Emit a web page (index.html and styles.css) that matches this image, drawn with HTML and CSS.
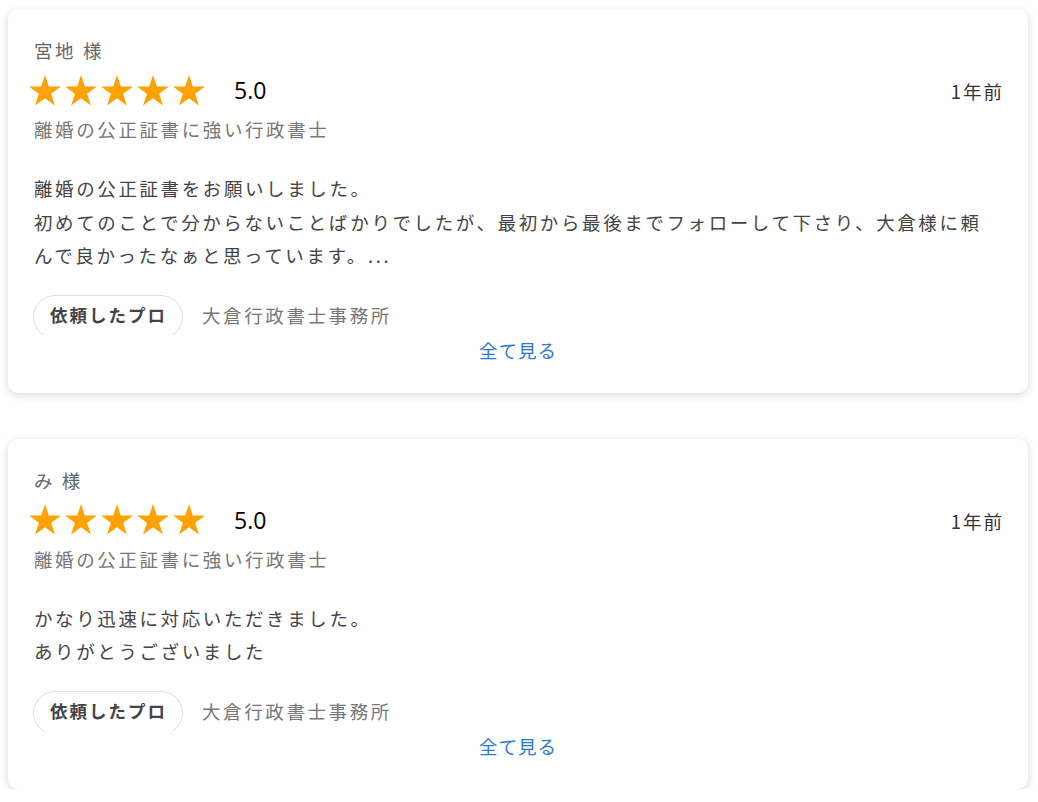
FILE: index.html
```html
<!DOCTYPE html>
<html lang="ja">
<head>
    <meta charset="UTF-8">
    <meta name="viewport" content="width=device-width, initial-scale=1.0">
    <title>口コミ</title>
    <link rel="stylesheet" href="styles.css">
</head>
<body>
    <div class="review-list">
        <div class="review-card">
            <div class="reviewer">宮地 様</div>
            <div class="rating-row">
                <div class="stars">
                    <svg viewBox="0 0 32 31"><polygon points="16,0 19.78,11.62 32,11.62 22.12,18.81 25.89,30.43 16,23.25 6.11,30.43 9.88,18.81 0,11.62 12.22,11.62"/></svg>
                    <svg viewBox="0 0 32 31"><polygon points="16,0 19.78,11.62 32,11.62 22.12,18.81 25.89,30.43 16,23.25 6.11,30.43 9.88,18.81 0,11.62 12.22,11.62"/></svg>
                    <svg viewBox="0 0 32 31"><polygon points="16,0 19.78,11.62 32,11.62 22.12,18.81 25.89,30.43 16,23.25 6.11,30.43 9.88,18.81 0,11.62 12.22,11.62"/></svg>
                    <svg viewBox="0 0 32 31"><polygon points="16,0 19.78,11.62 32,11.62 22.12,18.81 25.89,30.43 16,23.25 6.11,30.43 9.88,18.81 0,11.62 12.22,11.62"/></svg>
                    <svg viewBox="0 0 32 31"><polygon points="16,0 19.78,11.62 32,11.62 22.12,18.81 25.89,30.43 16,23.25 6.11,30.43 9.88,18.81 0,11.62 12.22,11.62"/></svg>
                </div>
                <span class="score">5.0</span>
                <span class="posted">1年前</span>
            </div>
            <div class="service">離婚の公正証書に強い行政書士</div>
            <p class="review-text">離婚の公正証書をお願いしました。<br>初めてのことで分からないことばかりでしたが、最初から最後までフォローして下さり、大倉様に頼んで良かったなぁと思っています。...</p>
            <div class="pro-row">
                <div class="pro-badge-wrap"><span class="pro-badge">依頼したプロ</span></div>
                <span class="pro-name">大倉行政書士事務所</span>
            </div>
            <a class="see-all" href="#">全て見る</a>
        </div>

        <div class="review-card">
            <div class="reviewer">み 様</div>
            <div class="rating-row">
                <div class="stars">
                    <svg viewBox="0 0 32 31"><polygon points="16,0 19.78,11.62 32,11.62 22.12,18.81 25.89,30.43 16,23.25 6.11,30.43 9.88,18.81 0,11.62 12.22,11.62"/></svg>
                    <svg viewBox="0 0 32 31"><polygon points="16,0 19.78,11.62 32,11.62 22.12,18.81 25.89,30.43 16,23.25 6.11,30.43 9.88,18.81 0,11.62 12.22,11.62"/></svg>
                    <svg viewBox="0 0 32 31"><polygon points="16,0 19.78,11.62 32,11.62 22.12,18.81 25.89,30.43 16,23.25 6.11,30.43 9.88,18.81 0,11.62 12.22,11.62"/></svg>
                    <svg viewBox="0 0 32 31"><polygon points="16,0 19.78,11.62 32,11.62 22.12,18.81 25.89,30.43 16,23.25 6.11,30.43 9.88,18.81 0,11.62 12.22,11.62"/></svg>
                    <svg viewBox="0 0 32 31"><polygon points="16,0 19.78,11.62 32,11.62 22.12,18.81 25.89,30.43 16,23.25 6.11,30.43 9.88,18.81 0,11.62 12.22,11.62"/></svg>
                </div>
                <span class="score">5.0</span>
                <span class="posted">1年前</span>
            </div>
            <div class="service">離婚の公正証書に強い行政書士</div>
            <p class="review-text">かなり迅速に対応いただきました。<br>ありがとうございました</p>
            <div class="pro-row">
                <div class="pro-badge-wrap"><span class="pro-badge">依頼したプロ</span></div>
                <span class="pro-name">大倉行政書士事務所</span>
            </div>
            <a class="see-all" href="#">全て見る</a>
        </div>
    </div>
</body>
</html>
```

FILE: styles.css
```css
body {
    margin: 0;
    padding: 9px 10px 0 8px;
    background-color: #fff;
    font-family: "Noto Sans CJK JP", "Noto Sans", sans-serif;
}

.review-list {
    display: flex;
    flex-direction: column;
    gap: 46px;
}

.review-card {
    display: flex;
    flex-direction: column;
    padding: 29px 26px 31px 26px;
    background-color: #fff;
    border-radius: 10px;
    box-shadow: 0 2px 8px rgba(0, 0, 0, 0.16);
}

.reviewer {
    font-size: 18.5px;
    line-height: 24px;
    letter-spacing: 2.6px;
    color: #666;
}

.rating-row {
    display: flex;
    align-items: center;
    height: 36px;
    margin-top: 10px;
}

.stars {
    display: flex;
    gap: 4px;
    margin-left: -5px;
}

.stars svg {
    width: 32px;
    height: 31px;
    fill: #ffa200;
}

.score {
    margin-left: 29px;
    font-family: "Open Sans", sans-serif;
    font-size: 23px;
    color: #000;
}

.posted {
    margin-left: auto;
    margin-top: 2px;
    margin-right: -2px;
    font-size: 18.5px;
    letter-spacing: 2px;
    color: #333;
}

.service {
    margin-top: 9px;
    font-size: 18.5px;
    line-height: 24px;
    letter-spacing: 2.6px;
    color: #777;
}

.review-text {
    margin: 31px 0 0;
    font-size: 18.5px;
    line-height: 33.5px;
    letter-spacing: 2.6px;
    color: #444;
}

.pro-row {
    display: flex;
    align-items: center;
    margin-top: 22px;
}

.pro-badge-wrap {
    height: 40px;
    overflow: hidden;
    margin-left: -1px;
}

.pro-badge {
    display: flex;
    align-items: center;
    height: 44px;
    box-sizing: border-box;
    padding: 0 15px 4px 16px;
    border: 1px solid #ddd;
    border-radius: 22px;
    font-size: 17.5px;
    font-weight: bold;
    letter-spacing: 2px;
    color: #444;
}

.pro-name {
    margin-left: 19px;
    font-size: 18.5px;
    letter-spacing: 2.6px;
    color: #777;
}

.see-all {
    align-self: center;
    margin-top: 3px;
    font-size: 18.5px;
    line-height: 24px;
    letter-spacing: 1px;
    color: #2a78d2;
    text-decoration: none;
}
```
